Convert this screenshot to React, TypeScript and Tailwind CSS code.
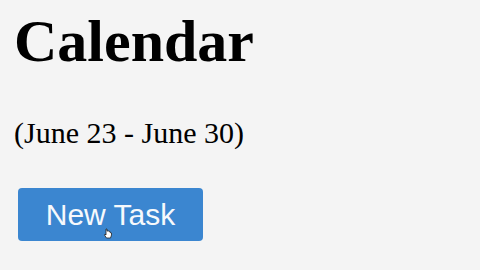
export default function App() {
  return (
    <div className="w-[480px] h-[270px] bg-[#f4f4f4] overflow-hidden flex flex-col items-start pl-[14px] font-['Liberation_Serif','Times_New_Roman',serif] text-black">
      <h1 className="mt-[11px] text-[60px] leading-none font-bold">Calendar</h1>
      <p className="mt-[47px] text-[30px] leading-none">(June 23 - June 30)</p>
      <button className="relative mt-[40px] ml-[4px] w-[185px] h-[53px] rounded-[4px] bg-[#3b86d0] text-[#f6f9fc] text-[30px] leading-none flex items-center justify-center font-['Liberation_Sans',Arial,sans-serif]">
        New Task
        {/* mouse pointer */}
        <svg
          className="absolute left-[86px] top-[40px] w-[9px] h-[11px]"
          viewBox="0 0 9 11"
        >
          <path
            d="M2 1 v6 l-1 -1 l-0.5 1 l2 3 h4 l1 -3 v-2 l-1.5 -0.5 v-1 l-1.5 -0.5 l-1.5 0 v-2 z"
            fill="#fff"
            stroke="#222"
            strokeWidth="0.8"
          />
        </svg>
      </button>
    </div>
  );
}
